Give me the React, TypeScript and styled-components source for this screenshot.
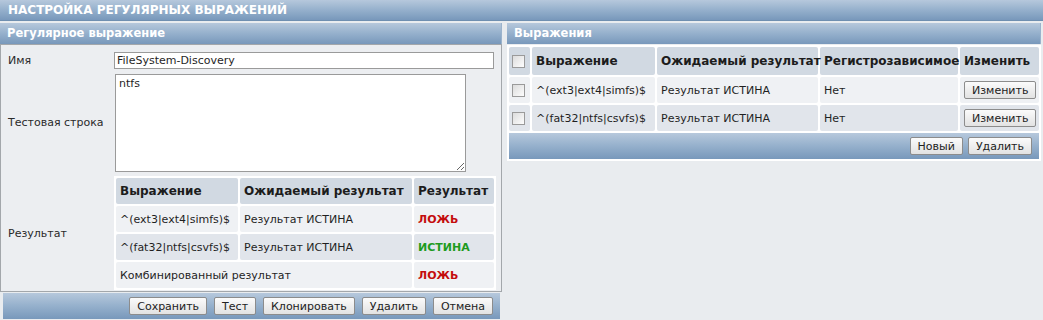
import React from 'react';
import styled, { createGlobalStyle } from 'styled-components';

const GlobalStyle = createGlobalStyle`
  body {
    margin: 0;
    background: #e9ecef;
    font-family: "DejaVu Sans", Verdana, sans-serif;
    font-size: 11px;
    color: #1f1f1f;
  }
`;

const barGradient = 'linear-gradient(to bottom, #b6c8dc 0%, #95b0cc 50%, #7898bb 100%)';

const Page = styled.div`
  width: 1043px;
  height: 320px;
  overflow: hidden;
`;

const PageHeader = styled.div`
  height: 21px;
  line-height: 21px;
  padding-left: 8px;
  background: ${barGradient};
  color: #fff;
  font-weight: bold;
  font-size: 12px;
  border-bottom: 1px solid #6f8fb0;
  box-sizing: border-box;
`;

const Columns = styled.div`
  display: flex;
  gap: 5px;
  margin-top: 2px;
  align-items: flex-start;
`;

const LeftCol = styled.div`
  width: 502px;
  display: flex;
  flex-direction: column;
`;

const RightCol = styled.div`
  width: 534px;
  display: flex;
  flex-direction: column;
`;

const SubHeader = styled.div`
  height: 21px;
  line-height: 20px;
  padding-left: 7px;
  background: ${barGradient};
  color: #fff;
  font-weight: bold;
  font-size: 11.5px;
  box-sizing: border-box;
  border-right: 1px solid #9bb3cc;
`;

const FormBox = styled.div`
  border: 1px solid #a3a7ab;
  background: #eceef1;
  display: grid;
  grid-template-columns: 106px 1fr;
  align-items: center;
  padding: 7px 5px 1px 7px;
`;

const Label = styled.div`
  color: #2a2a2a;
`;

const TextInput = styled.input`
  width: 380px;
  height: 17px;
  box-sizing: border-box;
  border: 1px solid #9a9a9a;
  font: inherit;
  padding: 0 2px;
  margin: 0;
  color: #1f1f1f;
  background: #fff;
`;

const TextArea = styled.textarea`
  width: 351px;
  height: 98px;
  box-sizing: border-box;
  border: 1px solid #9a9a9a;
  font: inherit;
  padding: 2px 3px;
  margin: 5px 0 4px 1px;
  display: block;
  color: #1f1f1f;
  background: #fff;
`;

const Grid = styled.table<{ $fixed?: boolean }>`
  border-collapse: separate;
  border-spacing: 2px;
  background: #fff;
  table-layout: ${p => (p.$fixed ? 'fixed' : 'auto')};
`;

const HeadCell = styled.th<{ $w?: number; $tall?: boolean }>`
  box-sizing: border-box;
  width: ${p => (p.$w ? `${p.$w}px` : 'auto')};
  background: #d1d9e2;
  color: #1c1c1c;
  font-weight: bold;
  font-size: 12px;
  text-align: left;
  padding: 0 4px;
  height: ${p => (p.$tall ? 28 : 26)}px;
  border-radius: 2px;
  white-space: nowrap;
`;

const Cell = styled.td<{ $alt?: boolean; $right?: boolean }>`
  box-sizing: border-box;
  background: ${p => (p.$alt ? '#e1e5eb' : '#eff1f4')};
  padding: 0 4px;
  height: 26px;
  border-radius: 2px;
  white-space: nowrap;
  text-align: ${p => (p.$right ? 'right' : 'left')};
`;

const Verdict = styled.span<{ $ok: boolean }>`
  color: ${p => (p.$ok ? '#1e9b1e' : '#c40d0d')};
  font-weight: bold;
`;

const ButtonBar = styled.div<{ $gap?: number }>`
  background: ${barGradient};
  display: flex;
  justify-content: flex-end;
  align-items: center;
  gap: ${p => p.$gap ?? 7}px;
  height: 26px;
  padding-right: 7px;
`;

const LeftBar = styled(ButtonBar)`
  margin: 1px 2px 0 3px;
`;

const Button = styled.button`
  font: inherit;
  font-size: 11px;
  color: #222;
  height: 18px;
  padding: 0 7px;
  border: 1px solid #8c8c8c;
  border-radius: 2px;
  background: linear-gradient(to bottom, #fbfbfb, #e2e2e2);
  cursor: pointer;
`;

const CheckBox = styled.input.attrs({ type: 'checkbox' })`
  appearance: none;
  width: 13px;
  height: 13px;
  margin: 0;
  border: 1px solid #9a9a9a;
  background: linear-gradient(135deg, #dcdcdc, #fdfdfd);
  display: block;
`;

const CheckCell = styled.td<{ $alt?: boolean; $head?: boolean }>`
  box-sizing: border-box;
  background: ${p => (p.$head ? '#d1d9e2' : p.$alt ? '#e1e5eb' : '#eff1f4')};
  width: 21px;
  padding: 0 0 0 3px;
  border-radius: 2px;
  vertical-align: middle;
`;

const FooterCell = styled.td`
  padding: 0;
`;

const RightGrid = styled(Grid)`
  width: 100%;
  margin-top: 1px;
`;

const testRows = [
  { expr: '^(ext3|ext4|simfs)$', expected: 'Результат ИСТИНА', ok: false },
  { expr: '^(fat32|ntfs|csvfs)$', expected: 'Результат ИСТИНА', ok: true },
];

export default function App() {
  return (
    <Page>
      <GlobalStyle />
      <PageHeader>НАСТРОЙКА РЕГУЛЯРНЫХ ВЫРАЖЕНИЙ</PageHeader>
      <Columns>
        <LeftCol>
          <SubHeader>Регулярное выражение</SubHeader>
          <FormBox>
            <Label>Имя</Label>
            <TextInput defaultValue="FileSystem-Discovery" />
            <Label>Тестовая строка</Label>
            <TextArea defaultValue="ntfs" />
            <Label>Результат</Label>
            <Grid>
              <thead>
                <tr>
                  <HeadCell $w={122}>Выражение</HeadCell>
                  <HeadCell $w={172}>Ожидаемый результат</HeadCell>
                  <HeadCell>Результат</HeadCell>
                </tr>
              </thead>
              <tbody>
                {testRows.map((r, i) => (
                  <tr key={r.expr}>
                    <Cell $alt={i === 1}>{r.expr}</Cell>
                    <Cell $alt={i === 1}>{r.expected}</Cell>
                    <Cell $alt={i === 1}>
                      <Verdict $ok={r.ok}>{r.ok ? 'ИСТИНА' : 'ЛОЖЬ'}</Verdict>
                    </Cell>
                  </tr>
                ))}
                <tr>
                  <Cell colSpan={2}>Комбинированный результат</Cell>
                  <Cell>
                    <Verdict $ok={false}>ЛОЖЬ</Verdict>
                  </Cell>
                </tr>
              </tbody>
            </Grid>
          </FormBox>
          <LeftBar>
            <Button>Сохранить</Button>
            <Button>Тест</Button>
            <Button>Клонировать</Button>
            <Button>Удалить</Button>
            <Button>Отмена</Button>
          </LeftBar>
        </LeftCol>
        <RightCol>
          <SubHeader>Выражения</SubHeader>
          <RightGrid $fixed>
            <thead>
              <tr>
                <CheckCell $head>
                  <CheckBox />
                </CheckCell>
                <HeadCell $w={123} $tall>Выражение</HeadCell>
                <HeadCell $w={161} $tall>Ожидаемый результат</HeadCell>
                <HeadCell $w={138} $tall>Регистрозависимое</HeadCell>
                <HeadCell $tall>Изменить</HeadCell>
              </tr>
            </thead>
            <tbody>
              {testRows.map((r, i) => (
                <tr key={r.expr}>
                  <CheckCell $alt={i === 1}>
                    <CheckBox />
                  </CheckCell>
                  <Cell $alt={i === 1}>{r.expr}</Cell>
                  <Cell $alt={i === 1}>{r.expected}</Cell>
                  <Cell $alt={i === 1}>Нет</Cell>
                  <Cell $alt={i === 1} $right>
                    <Button>Изменить</Button>
                  </Cell>
                </tr>
              ))}
              <tr>
                <FooterCell colSpan={5}>
                  <ButtonBar $gap={5}>
                    <Button>Новый</Button>
                    <Button>Удалить</Button>
                  </ButtonBar>
                </FooterCell>
              </tr>
            </tbody>
          </RightGrid>
        </RightCol>
      </Columns>
    </Page>
  );
}
